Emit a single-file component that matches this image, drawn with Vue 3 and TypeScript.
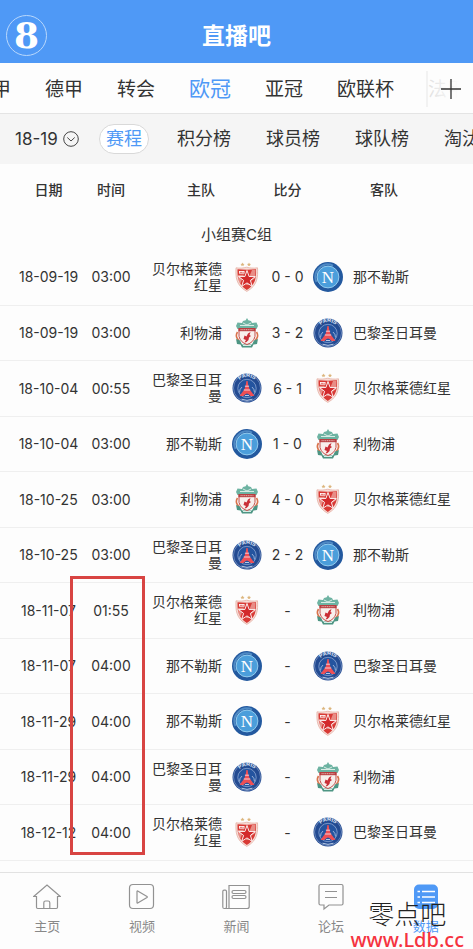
<script setup lang="ts">
import { ref } from 'vue'

type TeamKey = 'star' | 'napoli' | 'liverpool' | 'paris'

interface Match {
  date: string
  time: string
  home: TeamKey
  score: string
  away: TeamKey
}

interface TabItem {
  icon: string
  label: string
}

const teamNames: Record<TeamKey, string> = {
  star: '贝尔格莱德红星',
  napoli: '那不勒斯',
  liverpool: '利物浦',
  paris: '巴黎圣日耳曼',
}

const leagues: string[] = ['意甲', '德甲', '转会', '欧冠', '亚冠', '欧联杯', '法甲']
const sections: string[] = ['赛程', '积分榜', '球员榜', '球队榜', '淘汰赛']
const columns: string[] = ['日期', '时间', '主队', '比分', '客队']

const matches: Match[] = [
  { date: '18-09-19', time: '03:00', home: 'star', score: '0 - 0', away: 'napoli' },
  { date: '18-09-19', time: '03:00', home: 'liverpool', score: '3 - 2', away: 'paris' },
  { date: '18-10-04', time: '00:55', home: 'paris', score: '6 - 1', away: 'star' },
  { date: '18-10-04', time: '03:00', home: 'napoli', score: '1 - 0', away: 'liverpool' },
  { date: '18-10-25', time: '03:00', home: 'liverpool', score: '4 - 0', away: 'star' },
  { date: '18-10-25', time: '03:00', home: 'paris', score: '2 - 2', away: 'napoli' },
  { date: '18-11-07', time: '01:55', home: 'star', score: '-', away: 'liverpool' },
  { date: '18-11-07', time: '04:00', home: 'napoli', score: '-', away: 'paris' },
  { date: '18-11-29', time: '04:00', home: 'napoli', score: '-', away: 'star' },
  { date: '18-11-29', time: '04:00', home: 'paris', score: '-', away: 'liverpool' },
  { date: '18-12-12', time: '04:00', home: 'star', score: '-', away: 'paris' },
]

const tabs: TabItem[] = [
  { icon: 'home', label: '主页' },
  { icon: 'video', label: '视频' },
  { icon: 'news', label: '新闻' },
  { icon: 'forum', label: '论坛' },
  { icon: 'data', label: '数据' },
]

const activeLeague = ref<string>('欧冠')
const activeSection = ref<string>('赛程')
const activeTab = ref<string>('数据')
const season = ref<string>('18-19')
</script>

<template>
  <div class="page">
    <svg class="sprite" aria-hidden="true">
      <symbol id="crest-star" viewBox="0 0 30 30">
        <path d="M10.500 .4l.6 1.300 1.400.2-1 1 .2 1.400-1.200-.7-1.200.7.2-1.400-1-1 1.400-.2zM17 .4l.6 1.300 1.400.2-1 1 .2 1.400-1.200-.7-1.200.7.2-1.400-1-1 1.400-.2z" fill="#dcb57c" />
        <path d="M4 5.800C8 6.400 11.500 6 14.500 5.200C18 6 21.500 6.400 25.500 5.800C26 15 25.700 23.500 14.800 29.400C4 23.500 3.500 15 4 5.800z" fill="#f6dcd6" stroke="#e2a79b" stroke-width=".7" />
        <path d="M5.500 7.200C12 7.800 18 7.800 24 7.200C24.400 15.500 23.700 22.300 14.800 28C6.100 22.300 5.300 15.500 5.500 7.200z" fill="#d83a35" />
        <path d="M6 13L12 12.500 8 22.500Q5.700 18 6 13zM20 8L23.500 8 23.200 16 18 20 20.500 23 14 23z" fill="#f3c5bd" opacity=".6" />
        <path d="M15 8.500l2.100 6 6.200.1-4.900 3.800 1.800 6-5.200-3.500-5.300 3.500 1.900-6-5-3.800 6.300-.1z" fill="#d3292b" stroke="#fff" stroke-width=".9" />
        <path d="M7 9h5.500v2.600H7z" fill="#fff" />
        <path d="M7.800 10.300h3.900" stroke="#d83a35" stroke-width="1" stroke-dasharray="1 .4" />
      </symbol>
      <symbol id="crest-napoli" viewBox="0 0 30 30">
        <circle cx="15" cy="15" r="15" fill="#23599f" />
        <path d="M3.500 20A12.500 12.500 0 0 1 20 3.600" fill="none" stroke="#4f8ac4" stroke-width="2" />
        <circle cx="15" cy="15" r="10.900" fill="#4b9edb" stroke="#9bd1f1" stroke-width=".9" />
        <text x="15" y="20.500" text-anchor="middle" font-family="Liberation Serif, serif" font-size="17" fill="#fff">N</text>
      </symbol>
      <symbol id="crest-paris" viewBox="0 0 30 30">
        <circle cx="15" cy="15" r="14.500" fill="#234b92" />
        <circle cx="15" cy="15" r="13.500" fill="none" stroke="#95abd1" stroke-width=".6" />
        <circle cx="15" cy="15.500" r="9.200" fill="#24549f" stroke="#8ba6d2" stroke-width=".8" />
        <path id="paris-arc" d="M4.800 12A10.500 10.500 0 0 1 25.200 12" fill="none" />
        <text font-family="Liberation Sans, sans-serif" font-size="5.500" font-weight="700" fill="#dfe7f5"><textPath href="#paris-arc" startOffset="50%" text-anchor="middle">PARIS</textPath></text>
        <path d="M14.400 8h1.200l.7 4.500 1.400 4 4.800 6.500h-4Q15 17.800 11.500 23h-4l4.800-6.500 1.400-4z" fill="#ee4f55" />
        <path d="M12.900 13.200h4.200M11.800 17h6.400" stroke="#f7dde2" stroke-width=".9" />
        <path d="M7.500 19.500Q7.500 16 10 14M22.500 19.500Q22.500 16 20 14" fill="none" stroke="#b8c9e4" stroke-width=".8" />
        <path d="M13 22.500h4M9.500 26.200Q15 28.500 20.500 26.200" fill="none" stroke="#b8c9e4" stroke-width="1" />
      </symbol>
      <symbol id="crest-liverpool" viewBox="0 0 30 30">
        <path d="M15 0l1.300 2.200L19 3l1 2 4.500-.5L26 8l-1.500 3h-19L4 8l1.500-3.500L10 5l1-2 2.700-.8z" fill="#6db3a2" />
        <path d="M8 7.500h14M11 5l4 2 4-2" fill="none" stroke="#d8ece5" stroke-width="1" />
        <path d="M5.500 14q-2 3-.5 6l2 3M24.500 14q2 3 .5 6l-2 3" fill="none" stroke="#d9734c" stroke-width="1.600" />
        <path d="M4 21l4 1.500 2 4h10l2-4 4-1.500-1 5-3.500.5L20 29.500H10L8.500 26.500 5 26z" fill="#4d9583" />
        <path d="M7 10.500h16v8q-1.500 6-8 8-6.500-2-8-8z" fill="#f8efec" stroke="#c34c48" stroke-width="1" />
        <path d="M6.500 10h17v3.200h-17z" fill="#b93e41" />
        <path d="M8.500 11.700h13" stroke="#eac4bd" stroke-width=".9" stroke-dasharray="1.200 .6" />
        <path d="M18.500 14l-1 3 1.500 1-2 1.500-.5 2.500-2 2-2 .5 1.500-2.500-2.500-1 1-3.500 2 1 1.500-3z" fill="#c92e36" />
        <path d="M11 27.500h8" stroke="#d8ece5" stroke-width="1" />
      </symbol>
      <symbol id="tab-home" viewBox="0 0 28 28">
        <path d="M3.500 13.500H.7L14 2l13.300 11.500h-2.800v10.800q0 1.200-1.200 1.200H4.700q-1.200 0-1.200-1.200zM10.800 25.500v-5.800q0-1.700 1.700-1.700h2.600q1.700 0 1.700 1.700v5.800" />
      </symbol>
      <symbol id="tab-video" viewBox="0 0 28 28">
        <rect x="1.500" y="1.500" width="24" height="24" rx="3.500" />
        <path d="M9 8.400v11.200q0 .8.700.4l9.300-5.500q.7-.5 0-1L9.700 8q-.7-.4-.7.4z" />
      </symbol>
      <symbol id="tab-news" viewBox="0 0 28 28">
        <path d="M7 25.500V2.500h20.200v21q0 2-2 2H2.300Q.8 25.500.8 24V8.500q0-1.300 1.300-1.300h1.200q1.200 0 1.200 1.300V24q0 1.500-1.400 1.500" />
        <rect x="10" y="7.500" width="14" height="3" rx="1.500" />
        <rect x="10" y="12.500" width="14" height="3" rx="1.500" />
      </symbol>
      <symbol id="tab-forum" viewBox="0 0 28 28">
        <path d="M3.500 1.500h21q1.500 0 1.500 1.500v17.500q0 1.500-1.500 1.500H12l-5 4v-4H3.500Q2 22 2 20.500V3q0-1.500 1.500-1.500zM8 8.500h12M8 14.500h12" />
      </symbol>
      <symbol id="tab-data" viewBox="0 0 28 28">
        <rect x="2" y="1.500" width="24" height="24.500" rx="5" fill="#4f99f6" stroke="none" />
        <path d="M10 8.500h13M10 14h13M10 19.500h13M5.500 8.500H8M5.500 14H8M5.500 19.500H8" stroke="#fff" stroke-width="1.500" />
      </symbol>
    </svg>

    <header class="top">
      <span class="logo">8</span>
      <h1 class="title">直播吧</h1>
    </header>

    <nav class="leagues" aria-label="联赛">
      <div class="league-list">
        <button
          v-for="league in leagues"
          :key="league"
          type="button"
          class="league"
          :class="{ active: league === activeLeague }"
          @click="activeLeague = league"
        >{{ league }}</button>
      </div>
      <button type="button" class="add" aria-label="添加">
        <svg width="20" height="20" viewBox="0 0 20 20"><path d="M10 0v20M0 10h20" stroke="#333" stroke-width="1.300" /></svg>
      </button>
    </nav>

    <nav class="sections" aria-label="栏目">
      <label class="season">
        <select v-model="season" aria-label="赛季">
          <option>18-19</option>
          <option>17-18</option>
        </select>
        <svg width="16" height="16" viewBox="0 0 16 16" fill="none" stroke="#444"><circle cx="8" cy="8" r="7.300" /><path d="M4.300 6.500L8 10l3.700-3.500" /></svg>
      </label>
      <button
        v-for="section in sections"
        :key="section"
        type="button"
        class="section"
        :class="{ active: section === activeSection }"
        @click="activeSection = section"
      >{{ section }}</button>
    </nav>

    <main class="schedule">
      <table>
        <colgroup>
          <col class="col-date" />
          <col class="col-time" />
          <col class="col-home" />
          <col class="col-score" />
          <col />
        </colgroup>
        <thead>
          <tr>
            <th v-for="column in columns" :key="column" scope="col">{{ column }}</th>
          </tr>
        </thead>
        <tbody>
          <tr class="group">
            <td colspan="5">小组赛C组</td>
          </tr>
          <tr v-for="(match, index) in matches" :key="index" class="match">
            <td class="date">{{ match.date }}</td>
            <td>{{ match.time }}</td>
            <td>
              <div class="team home">
                <span class="name">{{ teamNames[match.home] }}</span>
                <svg class="crest"><use :href="`#crest-${match.home}`" /></svg>
              </div>
            </td>
            <td>{{ match.score }}</td>
            <td>
              <div class="team">
                <svg class="crest"><use :href="`#crest-${match.away}`" /></svg>
                <span>{{ teamNames[match.away] }}</span>
              </div>
            </td>
          </tr>
        </tbody>
      </table>
      <div class="marker"></div>
    </main>

    <nav class="tabbar" aria-label="主导航">
      <button
        v-for="tab in tabs"
        :key="tab.label"
        type="button"
        class="tab"
        :class="{ active: tab.label === activeTab }"
        @click="activeTab = tab.label"
      >
        <svg class="tab-icon"><use :href="`#tab-${tab.icon}`" /></svg>
        <span>{{ tab.label }}</span>
      </button>
      <div class="watermark">
        <span class="mark-name">零点吧</span>
        <span class="mark-site">www.Ldb.cc</span>
      </div>
    </nav>
  </div>
</template>

<style>
body {
  background: #fdfdfd;
}
</style>

<style scoped>
.page {
  display: flex;
  flex-direction: column;
  min-height: 100vh;
  overflow: hidden;
  background: #fdfdfd;
  color: #333;
  font-family: Inter, "Noto Sans CJK SC", sans-serif;
  font-size: 14px;
}

.sprite {
  display: none;
}

button,
select {
  margin: 0;
  padding: 0;
  border: 0;
  background: none;
  color: inherit;
  font: inherit;
  white-space: nowrap;
}

.top {
  display: grid;
  grid-template-columns: 42px 1fr 42px;
  align-items: center;
  box-sizing: border-box;
  height: 63px;
  padding: 8px 6px 0;
  background: #4f99f6;
  color: #fff;
}

.logo {
  box-sizing: border-box;
  width: 41px;
  height: 41px;
  border: 1px solid #b9d8fc;
  border-radius: 50%;
  font: 700 36px/38px "DejaVu Serif", serif;
  text-align: center;
}

.title {
  margin: 0;
  font-size: 23px;
  font-weight: 700;
  line-height: 32px;
  text-align: center;
}

.leagues {
  display: flex;
  position: relative;
  box-sizing: border-box;
  height: 51px;
  padding-bottom: 2px;
  border-bottom: 1px solid #e4e4e4;
}

.league-list {
  display: flex;
  gap: 34px;
  margin-left: -27px;
}

.league {
  font-size: 19px;
}

.league.active {
  color: #4f99f6;
  font-size: 21px;
}

.add {
  display: flex;
  position: absolute;
  top: 8px;
  right: 0;
  align-items: center;
  justify-content: center;
  width: 47px;
  height: 36px;
  border-left: 2px solid #f2f2f2;
  background: linear-gradient(90deg, rgba(253, 253, 253, 0.86), #fdfdfd 70%);
}

.sections {
  display: flex;
  align-items: center;
  height: 50px;
  padding-left: 15px;
  background: #f5f5f5;
}

.season {
  display: flex;
  flex: none;
  align-items: center;
  width: 84px;
  font-size: 17px;
}

.season select {
  width: 48px;
  appearance: none;
}

.section {
  flex: none;
  box-sizing: border-box;
  height: 30px;
  margin-right: 21px;
  padding: 0 6px;
  border: 1px solid transparent;
  border-radius: 15px;
  font-size: 18px;
  line-height: 26px;
}

.section.active {
  border-color: #d9d9d9;
  background: #fff;
  color: #4f99f6;
}

.schedule {
  flex: 1;
  position: relative;
}

table {
  width: 100%;
  border-collapse: collapse;
  table-layout: fixed;
}

.col-date {
  width: 85px;
}

.col-time {
  width: 52px;
}

.col-home {
  width: 128px;
}

.col-score {
  width: 45px;
}

th,
td {
  box-sizing: border-box;
  padding: 0;
  text-align: center;
  white-space: nowrap;
}

th {
  height: 50px;
  font-weight: 500;
}

th:first-child,
.date {
  padding-left: 12px;
}

th:last-child {
  padding-right: 15px;
}

.group td {
  height: 35px;
  padding-top: 7px;
  font-size: 15px;
  line-height: 20px;
}

.match td {
  height: 56px;
  border-bottom: 1px solid #efefef;
}

.match:nth-child(odd) td {
  height: 55px;
}

.team {
  display: flex;
  gap: 10px;
  align-items: center;
  padding-left: 3px;
  line-height: 16px;
}

.home {
  justify-content: flex-end;
  padding: 0 3px 0 0;
}

.name {
  max-width: 70px;
  text-align: right;
  white-space: normal;
}

.crest {
  flex: none;
  width: 30px;
  height: 30px;
}

.marker {
  position: absolute;
  top: 412px;
  left: 70px;
  box-sizing: border-box;
  width: 75px;
  height: 279px;
  border: 3px solid #d84442;
}

.tabbar {
  display: flex;
  position: relative;
  height: 76px;
  border-top: 1px solid #e2e2e2;
  color: #888;
}

.tab {
  display: flex;
  flex: 1;
  flex-direction: column;
  gap: 6px;
  align-items: center;
  padding-top: 10px;
  font-size: 13px;
  line-height: 18px;
}

.tab.active {
  color: #4f99f6;
}

.tab-icon {
  width: 28px;
  height: 28px;
  fill: none;
  stroke: #929292;
  stroke-width: 1.2;
}

.watermark {
  display: flex;
  position: absolute;
  right: 9px;
  bottom: -3px;
  flex-direction: column;
  align-items: center;
  pointer-events: none;
}

.mark-name {
  color: #222;
  font-size: 26px;
  font-weight: 300;
  line-height: 26px;
}

.mark-site {
  color: #f5333f;
  font: 500 20px/24px "Noto Sans", sans-serif;
}
</style>
